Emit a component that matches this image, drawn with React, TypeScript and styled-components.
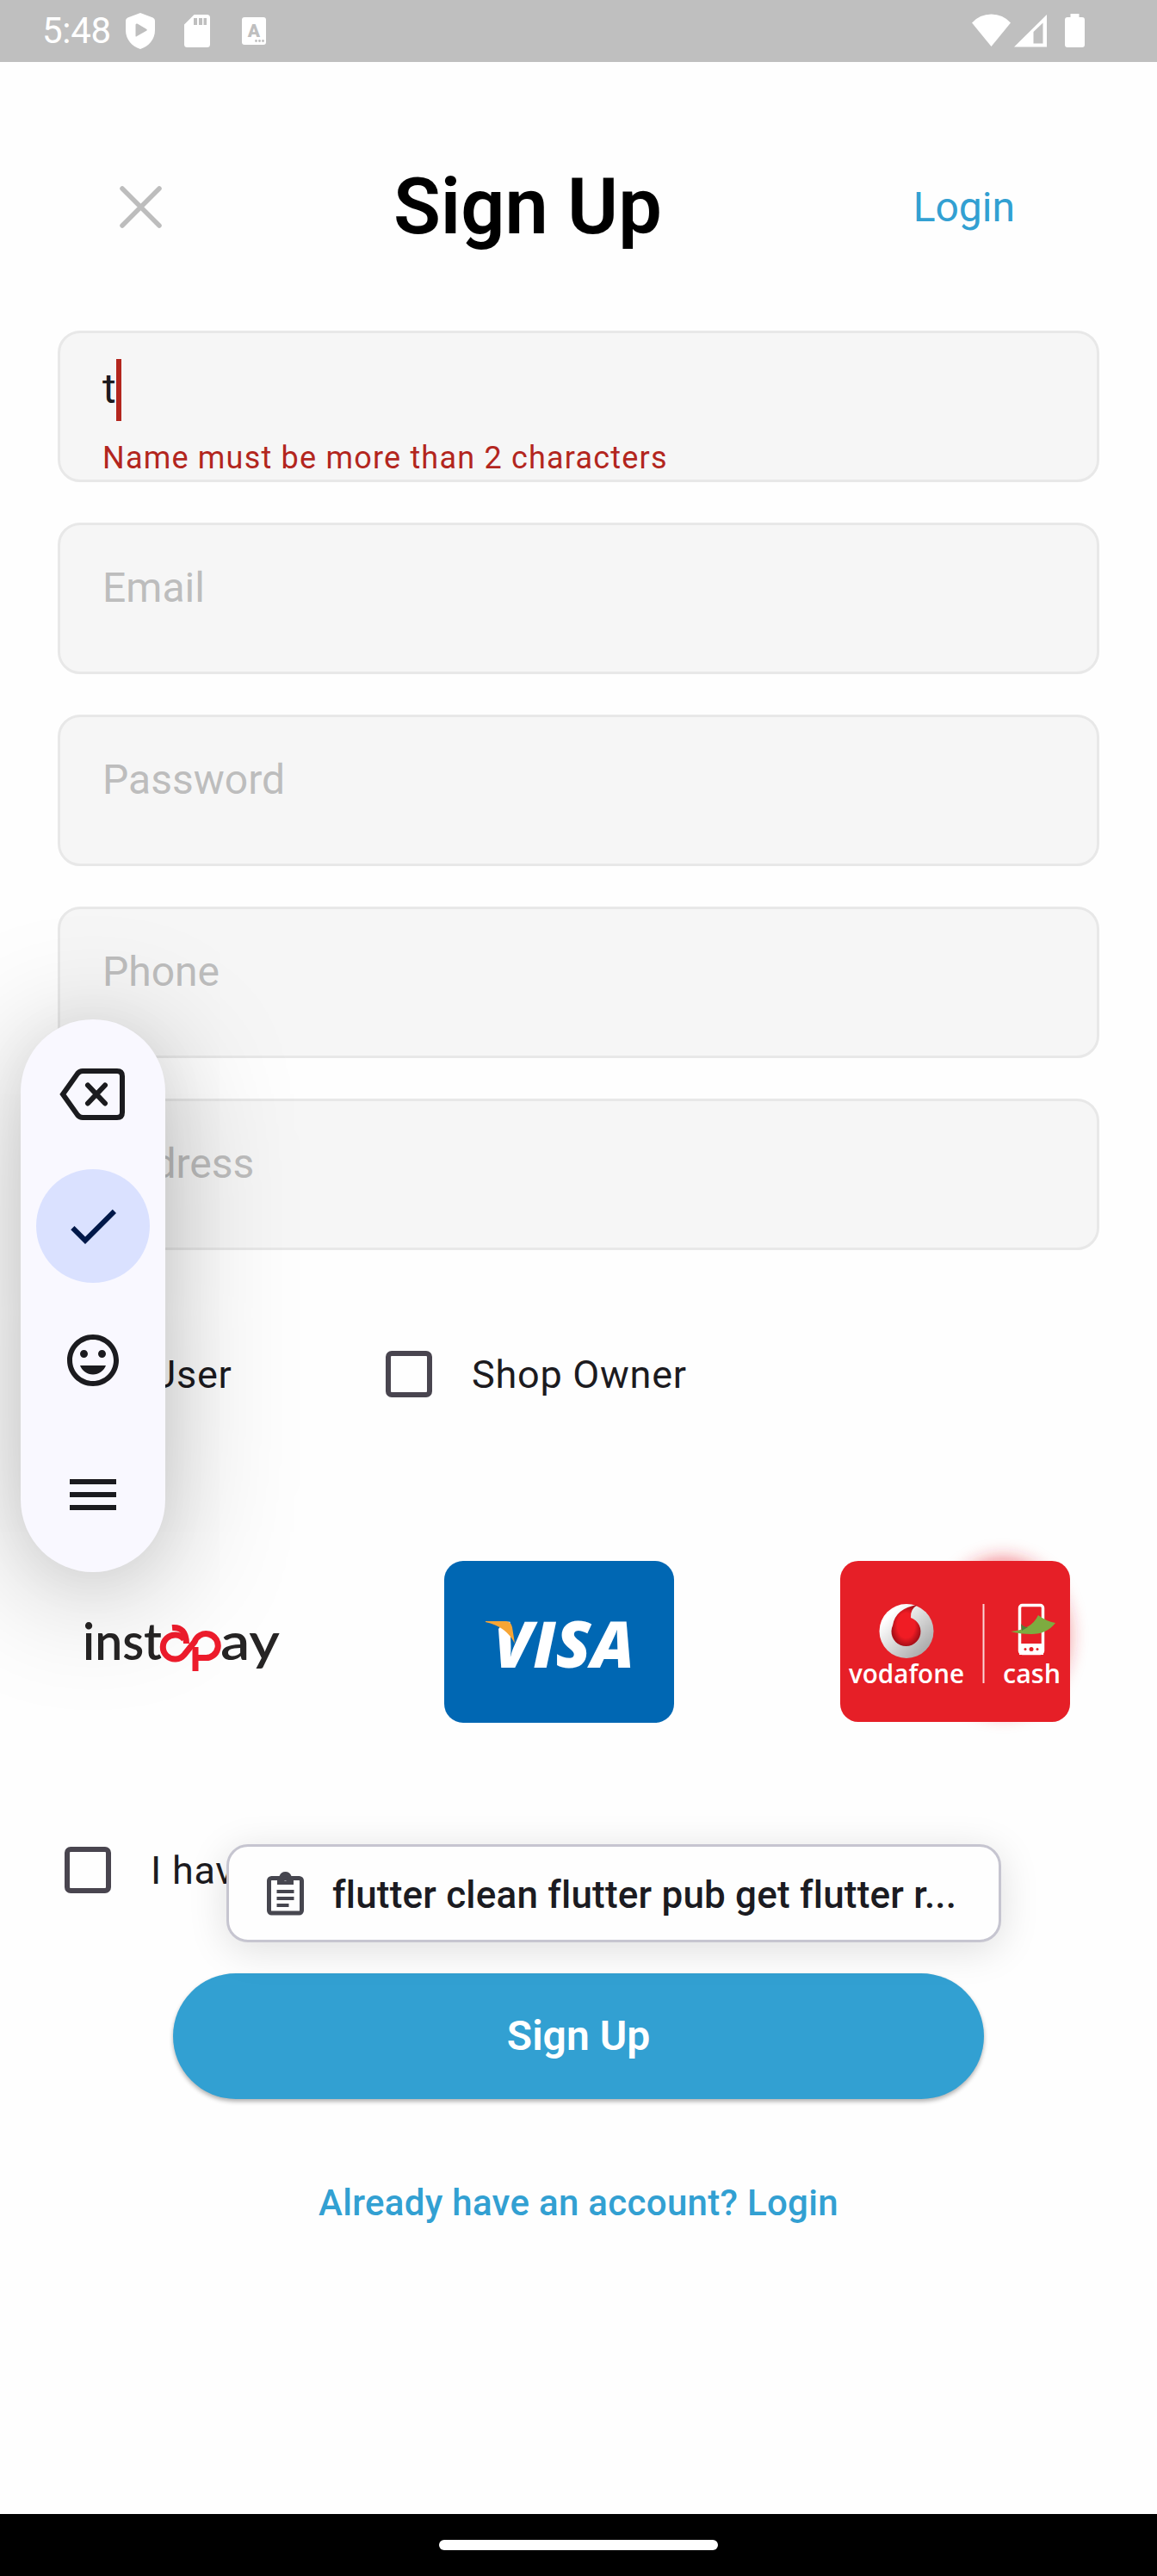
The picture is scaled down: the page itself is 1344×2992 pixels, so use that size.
import React from "react";
import styled, { createGlobalStyle } from "styled-components";

const Global = createGlobalStyle`
  * { box-sizing: border-box; }
  body { margin: 0; background: #fefefe; font-family: Roboto, "Liberation Sans", sans-serif; }
`;

const Screen = styled.div`
  position: relative;
  width: 1344px;
  height: 2992px;
  overflow: hidden;
  display: flex;
  flex-direction: column;
  background: #fefefe;
  color: #1c1b1f;
`;

const StatusBar = styled.header`
  height: 72px;
  flex: none;
  display: flex;
  justify-content: space-between;
  align-items: center;
  background: #bfbfbf;
  color: #fff;
  padding: 0 84px 0 49px;
`;

const StatusGroup = styled.div`
  display: flex;
  align-items: center;
  height: 72px;
`;

const Clock = styled.span`
  width: 97px;
  font-size: 42px;
  line-height: 70px;
  letter-spacing: -0.3px;
`;

const AppBar = styled.div`
  height: 312px;
  flex: none;
  display: flex;
  align-items: center;
  padding: 26px 165px 0 139px;
`;

const CloseButton = styled.button`
  width: 49px;
  height: 49px;
  margin-bottom: 2px;
  padding: 0;
  border: 0;
  background: none;
  svg { display: block; }
`;

const Title = styled.h1`
  margin: 0;
  flex: 1;
  padding-right: 23px;
  text-align: center;
  font-size: 90px;
  line-height: 108px;
  font-weight: 600;
  color: #000;
`;

const TextLink = styled.a`
  font-size: 48px;
  line-height: 56px;
  color: #32a0d2;
`;

const Form = styled.form`
  display: flex;
  flex-direction: column;
  gap: 47px;
  padding: 0 67px;
`;

const Field = styled.label`
  display: block;
  height: 176px;
  border: 3px solid #e8e8e8;
  border-radius: 26px;
  background: #f6f6f6;
  padding: 30px 49px 0;
`;

const Value = styled.div`
  display: flex;
  height: 72px;
  font-size: 48px;
  line-height: 69px;
  letter-spacing: 1.5px;
`;

const Caret = styled.span`
  width: 6px;
  height: 72px;
  margin-left: -1px;
  background: #b3261e;
`;

const ErrorText = styled.div`
  margin-top: 22px;
  font-size: 36px;
  line-height: 42px;
  letter-spacing: 1.2px;
  color: #b3261e;
  white-space: nowrap;
`;

const Hint = styled.div`
  padding-top: 7px;
  font-size: 48px;
  line-height: 72px;
  color: #bdbdbd;
`;

const Roles = styled.div`
  display: grid;
  grid-template-columns: 373px auto;
  justify-content: start;
  margin-top: 108px;
  padding-left: 75px;
  height: 72px;
`;

const CheckRow = styled.label`
  display: flex;
  align-items: center;
  height: 72px;
  gap: 46px;
  font-size: 45px;
  line-height: 72px;
  letter-spacing: 0.75px;
  white-space: nowrap;
`;

const CheckLabel = styled.span`
  padding-top: 2px;
`;

const Box = styled.span`
  width: 54px;
  height: 54px;
  border: 6px solid #49454f;
  border-radius: 7px;
`;

const Payments = styled.div`
  display: grid;
  grid-template-columns: 456px 460px auto;
  justify-content: start;
  height: 240px;
  margin-top: 148px;
  padding-left: 60px;
  svg { display: block; overflow: visible; }
`;

const Terms = styled.div`
  margin-top: 116px;
  padding-left: 75px;
`;

const Submit = styled.button`
  flex: none;
  width: 942px;
  height: 146px;
  margin: 84px auto 0;
  border: 0;
  border-radius: 73px;
  background: #32a0d2;
  color: #fff;
  font: 600 48px/56px Roboto, "Liberation Sans", sans-serif;
  box-shadow: 0 3px 5px rgba(0, 0, 0, 0.3);
`;

const Footer = styled.a`
  margin-top: 93px;
  text-align: center;
  font-size: 42px;
  line-height: 56px;
  font-weight: 500;
  letter-spacing: 0.3px;
  color: #32a0d2;
`;

const NavBar = styled.footer`
  height: 72px;
  flex: none;
  margin-top: auto;
  display: flex;
  align-items: center;
  justify-content: center;
  background: #000;
`;

const Handle = styled.div`
  width: 324px;
  height: 12px;
  border-radius: 6px;
  background: #fff;
`;

const FloatingTools = styled.aside`
  position: absolute;
  left: 24px;
  top: 1184px;
  width: 168px;
  height: 642px;
  border-radius: 84px;
  background: #f9f8ff;
  box-shadow: 0 20px 150px rgba(0, 0, 0, 0.26), 0 10px 60px rgba(0, 0, 0, 0.05);
  display: flex;
  flex-direction: column;
  align-items: center;
  padding-top: 18px;
  gap: 24px;
`;

const Tool = styled.button<{ $active?: boolean }>`
  width: 132px;
  height: 132px;
  padding: 0;
  border: 0;
  border-radius: 50%;
  display: grid;
  place-items: center;
  background: ${(p) => (p.$active ? "#dae1ff" : "transparent")};
  color: ${(p) => (p.$active ? "#001849" : "#1b1b1f")};
`;

const ClipboardChip = styled.div`
  position: absolute;
  left: 263px;
  top: 2142px;
  width: 900px;
  height: 114px;
  border: 3px solid #c6c5d0;
  border-radius: 25px;
  background: #fefefe;
  box-shadow: 0 8px 46px rgba(0, 0, 0, 0.13);
  display: flex;
  align-items: center;
  padding: 0 0 0 44px;
  font-size: 44px;
  line-height: 60px;
  font-weight: 500;
  color: #1b1b21;
  white-space: nowrap;
`;

const ClipText = styled.span`
  margin-left: 33px;
  padding-top: 3px;
  letter-spacing: 0.2px;
`;

const BackspaceIcon = styled.svg`
  margin: 6px 2px 0 0;
`;

const NoticeIcon = styled.svg<{ $gap: number }>`
  margin-left: ${(p) => p.$gap}px;
`;

const Shield = () => (
  <svg width="34" height="42" viewBox="0 0 34 42">
    <path fill="#fff" fillRule="evenodd" d="M17 0 31.6 5.5Q34 6.5 34 9V20C34 31 27 38.500 17 42C7 38.500 0 31 0 20V9Q0 6.500 2.400 5.500ZM11.500 13.500V27Q12 28 13 27L24.500 20.500Q25 20 24.500 19L13.500 12.500Q12 12 11.500 13.500Z" />
  </svg>
);

const SdCard = () => (
  <NoticeIcon $gap={34} width="30" height="38" viewBox="0 0 30 38">
    <path fill="#fff" fillRule="evenodd" d="M11.500 0H26.500Q30 0 30 3.500V34.500Q30 38 26.500 38H3.500Q0 38 0 34.500V11.500ZM11 4V12H15V4ZM17 4V12H21V4ZM22.500 4V12H26V4Z" />
  </NoticeIcon>
);

const Keyboard = () => (
  <NoticeIcon $gap={37} width="28" height="32" viewBox="0 0 28 32">
    <rect width="28" height="32" rx="3" fill="#fff" />
    <text x="14" y="22.500" textAnchor="middle" fontFamily="Roboto" fontWeight="900" fontSize="21" fill="#bfbfbf">A</text>
    <g fill="#bfbfbf"><circle cx="16.500" cy="27.500" r="1.400" /><circle cx="20.500" cy="27.500" r="1.400" /><circle cx="24.500" cy="27.500" r="1.400" /></g>
  </NoticeIcon>
);

const Signals = () => (
  <svg width="131" height="40" viewBox="1129 16 131 40" fill="#fff">
    <path d="M1129 26.500Q1138 16.500 1151.500 16.500T1174 26.500L1151.500 54Z" />
    <path fillRule="evenodd" d="M1216 17V54.500H1178ZM1211.500 26.500 1200.500 37V50.500H1211.500Z" />
    <path d="M1243.500 16H1253.500V20H1257Q1260 20 1260 23V52Q1260 55 1257 55H1240Q1237 55 1237 52V23Q1237 20 1240 20H1243.500Z" />
  </svg>
);

const Instapay = () => (
  <svg width="300" height="240" viewBox="60 1780 300 240">
    <g fontFamily="Lato, sans-serif" fontSize="60" fontWeight="600" fill="#262424">
      <text x="96" y="1928" textLength="92" lengthAdjust="spacingAndGlyphs">inst</text>
      <text x="256" y="1928" textLength="69" lengthAdjust="spacingAndGlyphs">ay</text>
    </g>
    <g fill="none" stroke="#ee1c2c" strokeWidth="7">
      <path d="M200 1890.500Q216 1889 216.500 1909" />
      <path d="M214 1904A14 14 0 1 0 214 1922L226 1907A14 14 0 1 1 238 1925.500H228" />
      <path d="M227 1941V1913" />
    </g>
  </svg>
);

const Visa = () => (
  <svg width="268" height="240" viewBox="516 1780 268 240">
    <rect x="516" y="1813" width="267" height="188" rx="22" fill="#0067b3" />
    <text x="573" y="1937" textLength="164" lengthAdjust="spacingAndGlyphs" fontFamily="Open Sans" fontStyle="italic" fontWeight="800" fontSize="75" fill="#fff">VISA</text>
    <path fill="#0067b3" d="M560 1880H590L578 1893Z" />
    <path fill="#f7a534" d="M564 1883H588Q594 1884 595 1890L598 1909Q588 1889 564 1884Z" />
  </svg>
);

const Vodafone = () => (
  <svg width="268" height="240" viewBox="976 1780 268 240">
    <defs>
      <linearGradient id="silver" x1="0" y1="0" x2="1" y2="1">
        <stop offset="0.200" stopColor="#fff" /><stop offset="1" stopColor="#999" />
      </linearGradient>
      <radialGradient id="ruby">
        <stop offset="0.600" stopColor="#f01c24" /><stop offset="1" stopColor="#a80f18" />
      </radialGradient>
      <filter id="glow" x="-50%" y="-50%" width="200%" height="200%"><feGaussianBlur stdDeviation="11" /></filter>
    </defs>
    <ellipse cx="1165" cy="1900" rx="76" ry="90" fill="#e61f27" opacity="0.550" filter="url(#glow)" />
    <rect x="976" y="1813" width="267" height="187" rx="21" fill="#e61f27" />
    <circle cx="1053" cy="1894.500" r="31.500" fill="url(#silver)" />
    <path fill="url(#ruby)" d="M1066 1864Q1057 1869 1058 1879A17 17 0 1 1 1037 1888Q1040 1868 1066 1864Z" />
    <path stroke="#fbd5d6" strokeWidth="2" d="M1142.500 1863V1955" />
    <rect x="1184.500" y="1864.500" width="27" height="56" rx="3" fill="none" stroke="#fff" strokeWidth="3.500" />
    <path fill="#fff" d="M1184 1909H1212V1922H1184Z" />
    <g fill="#e61f27"><circle cx="1191" cy="1915.500" r="1.500" /><circle cx="1198" cy="1915.500" r="2.500" /><circle cx="1205" cy="1915.500" r="1.500" /></g>
    <path fill="#7dab40" d="M1174 1895Q1198 1893 1206 1876Q1215 1883 1226 1885Q1216 1898 1198 1898Q1184 1898 1174 1895Z" />
    <path fill="#4c8038" d="M1186 1886Q1189 1890 1194 1890L1187 1894Z" />
    <g fontFamily="Open Sans" fontWeight="600" fontSize="31" fill="#fff">
      <text x="986" y="1955" textLength="134" lengthAdjust="spacingAndGlyphs">vodafone</text>
      <text x="1165" y="1955" textLength="67" lengthAdjust="spacingAndGlyphs">cash</text>
    </g>
  </svg>
);

const Backspace = () => (
  <BackspaceIcon width="76" height="60" viewBox="0 0 76 60" fill="none" stroke="currentColor" strokeWidth="6">
    <path d="M4 30 21 6Q23.500 3 27 3H67Q73 3 73 9V51Q73 57 67 57H27Q23.500 57 21 54Z" />
    <path strokeLinecap="round" d="M33 19.500 53 40.500M53 19.500 33 40.500" />
  </BackspaceIcon>
);

const glyphs = {
  check: "M9 16.17 4.83 12l-1.420 1.410L9 19 21 7l-1.410-1.410z",
  smile: "M11.990 2C6.470 2 2 6.480 2 12s4.470 10 9.990 10C17.520 22 22 17.520 22 12S17.520 2 11.990 2zM12 20c-4.420 0-8-3.580-8-8s3.580-8 8-8 8 3.580 8 8-3.580 8-8 8zm3.500-9c.830 0 1.500-.670 1.500-1.500S16.330 8 15.500 8 14 8.670 14 9.500s.670 1.500 1.500 1.500zm-7 0c.830 0 1.500-.670 1.500-1.500S9.330 8 8.500 8 7 8.670 7 9.500 7.670 11 8.500 11zM7 14C7.780 16.050 9.720 17.500 12 17.500s4.220-1.450 5-3.500z",
  menu: "M3 18h18v-2H3v2zm0-5h18v-2H3v2zm0-7v2h18V6H3z",
};

const Glyph = ({ name }: { name: keyof typeof glyphs }) => (
  <svg width="72" height="72" viewBox="0 0 24 24" fill="currentColor"><path d={glyphs[name]} /></svg>
);

const Clipboard = () => (
  <svg width="43" height="51" viewBox="0 0 43 51" fill="none" stroke="#46464f">
    <rect x="2.500" y="7.500" width="38" height="40.500" rx="3" strokeWidth="5" />
    <path fill="#46464f" stroke="none" fillRule="evenodd" d="M12 15V5H14.500Q16.500 0 21.500 0T28.500 5H31V15ZM21.500 5A2.700 2.700 0 1 0 21.500 10.400A2.700 2.700 0 1 0 21.500 5Z" />
    <path strokeWidth="4" d="M11.500 23H31.500M11.500 31H31.500M11.500 39H25.500" />
  </svg>
);

export default function App() {
  return (
    <>
      <Global />
      <Screen>
        <StatusBar>
          <StatusGroup><Clock>5:48</Clock><Shield /><SdCard /><Keyboard /></StatusGroup>
          <StatusGroup><Signals /></StatusGroup>
        </StatusBar>
        <AppBar>
          <CloseButton aria-label="Close">
            <svg width="49" height="49" stroke="#bdbdbd" strokeWidth="5.500" strokeLinecap="round"><path d="M3 3 46 46M46 3 3 46" /></svg>
          </CloseButton>
          <Title>Sign Up</Title>
          <TextLink>Login</TextLink>
        </AppBar>
        <Form>
          <Field>
            <Value>t<Caret /></Value>
            <ErrorText>Name must be more than 2 characters</ErrorText>
          </Field>
          {["Email", "Password", "Phone", "Address"].map((label) => (
            <Field key={label}><Hint>{label}</Hint></Field>
          ))}
        </Form>
        <Roles>
          <CheckRow><Box /><CheckLabel>User</CheckLabel></CheckRow>
          <CheckRow><Box /><CheckLabel>Shop Owner</CheckLabel></CheckRow>
        </Roles>
        <Payments><Instapay /><Visa /><Vodafone /></Payments>
        <Terms><CheckRow><Box /><CheckLabel>I have</CheckLabel></CheckRow></Terms>
        <Submit>Sign Up</Submit>
        <Footer>Already have an account? Login</Footer>
        <NavBar><Handle /></NavBar>
        <FloatingTools>
          <Tool><Backspace /></Tool>
          <Tool $active><Glyph name="check" /></Tool>
          <Tool><Glyph name="smile" /></Tool>
          <Tool><Glyph name="menu" /></Tool>
        </FloatingTools>
        <ClipboardChip><Clipboard /><ClipText>flutter clean flutter pub get flutter r...</ClipText></ClipboardChip>
      </Screen>
    </>
  );
}
